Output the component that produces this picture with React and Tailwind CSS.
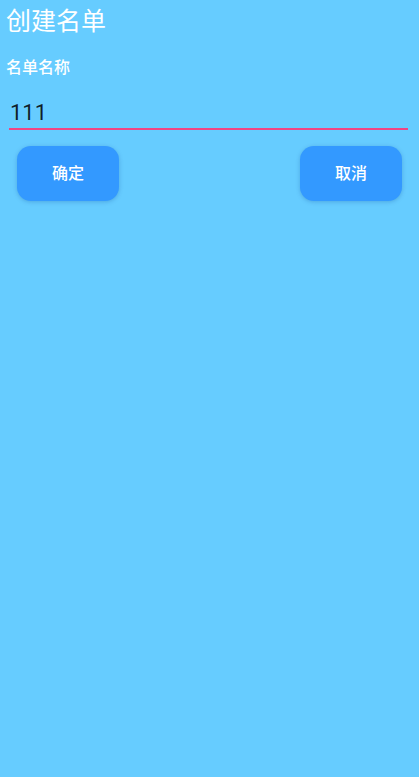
export default function App() {
  return (
    <div
      className="w-full min-h-screen h-[777px] bg-[#66ccff] overflow-hidden"
      style={{ fontFamily: 'Roboto, "Noto Sans CJK SC", sans-serif' }}
    >
      <div className="pt-[9px] pl-[6px]">
        <h1 className="text-[25px] leading-none text-white font-normal h-[25px]">创建名单</h1>
      </div>
      <div className="mt-[26px] pl-[6px]">
        <div className="text-[16px] leading-none text-white font-medium h-[16px]">名单名称</div>
      </div>
      <div className="mt-[26px] ml-[9px] mr-[11px]">
        <div className="text-[22px] leading-none text-black/85 h-[22px] pl-[1px]">111</div>
        <div className="mt-[3.5px] h-[2px] bg-[#f04483]" />
      </div>
      <div className="mt-[16.5px] px-[17px] flex justify-between">
        <button className="w-[102px] h-[55px] rounded-[14px] bg-[#3399ff] text-white text-[16px] font-medium shadow-[0_1px_4px_rgba(0,60,140,0.25)]">
          确定
        </button>
        <button className="w-[102px] h-[55px] rounded-[14px] bg-[#3399ff] text-white text-[16px] font-medium shadow-[0_1px_4px_rgba(0,60,140,0.25)]">
          取消
        </button>
      </div>
    </div>
  );
}
